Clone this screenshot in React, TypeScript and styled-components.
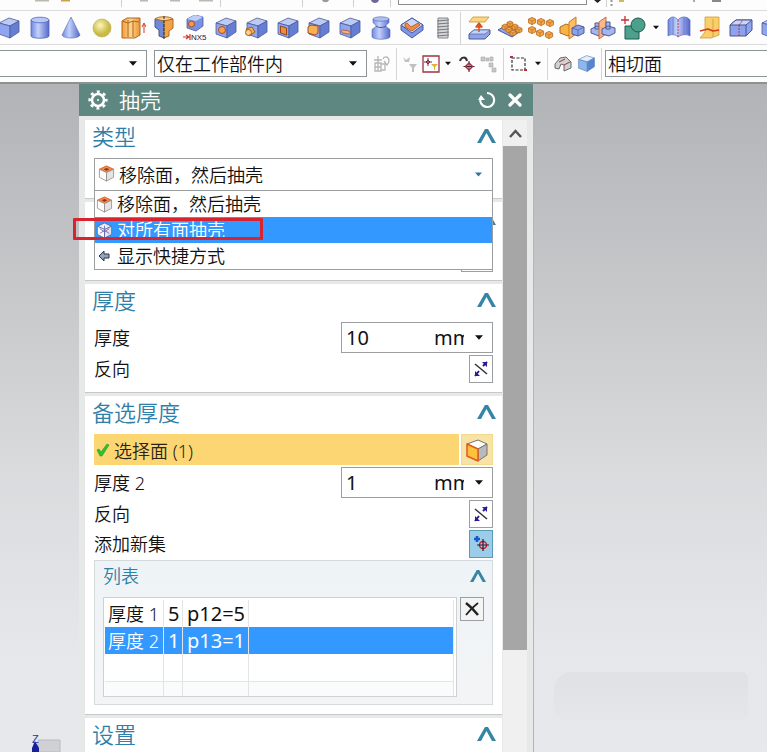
import React from 'react';
import styled, { createGlobalStyle, css } from 'styled-components';

const GlobalStyle = createGlobalStyle`
  * {
    box-sizing: border-box;
  }

  body {
    margin: 0;
    font-family: 'Noto Sans', 'Noto Sans CJK SC', sans-serif;
    font-size: 18px;
    font-weight: 350;
    color: #111;
  }

  button, input, select {
    font: inherit;
    color: inherit;
    margin: 0;
    padding: 0;
  }
`;

const Page = styled.div`
  display: flex;
  flex-direction: column;
  height: 100vh;
  overflow: hidden;
  background: #fdfdfd;
`;

/* ---------- toolbars ---------- */

const TopStrip = styled.div`
  display: flex;
  flex: none;
  height: 10px;
  overflow: hidden;

  svg {
    flex: none;
  }
`;

const SearchBox = styled.input`
  width: 189px;
  height: 5px;
  border: 1px solid #8c8c8c;
  border-top: 0;
  background: white;
`;

const IconBar = styled.div`
  display: flex;
  flex: none;
  align-items: center;
  height: 35px;
  margin-left: -7px;
  border-top: 1px solid #dcdcdc;
  border-bottom: 1px solid #dcdcdc;
  overflow: hidden;
`;

const ToolButton = styled.button<{ $width?: number }>`
  display: flex;
  flex: none;
  align-items: center;
  justify-content: center;
  width: ${({ $width }) => $width ?? 31}px;
  height: 26px;
  border: 0;
  background: none;
`;

const Divider = styled.span<{ $space?: number }>`
  flex: none;
  width: 1px;
  height: 32px;
  margin: 0 ${({ $space }) => $space ?? 2}px;
  background: #d4d4d4;
`;

const FilterBar = styled.div`
  display: flex;
  flex: none;
  align-items: center;
  height: 39px;
  border-bottom: 2px solid #8b9290;
  overflow: hidden;
`;

const Combo = styled.label<{ $width: number }>`
  position: relative;
  display: flex;
  flex: none;
  align-items: center;
  width: ${({ $width }) => $width}px;
  height: 27px;

  select {
    appearance: none;
    width: 100%;
    height: 100%;
    padding: 0 28px 0 2px;
    border: 1px solid #8f9496;
    border-radius: 0;
    background: white;
    line-height: 24px;
  }

  svg {
    position: absolute;
    right: 10px;
    pointer-events: none;
  }
`;

const LeftCombo = styled(Combo)`
  margin-left: -1px;
  margin-right: 7px;
`;

/* ---------- workspace ---------- */

const Workspace = styled.main`
  position: relative;
  display: flex;
  flex: 1;
  min-height: 0;
  padding-left: 79px;
  background: linear-gradient(#b2b3b6 0%, #c5c7c9 30%, #d9dbdd 58%, #e5e7ea 85%, #e6e8eb 100%);
`;

const Ghost = styled.div`
  position: absolute;
  right: 19px;
  bottom: 32px;
  width: 194px;
  height: 48px;
  border-radius: 18px 6px 6px 12px;
  background: linear-gradient(#e0e1e4, #e5e6e9);
`;

const Triad = styled.svg`
  position: absolute;
  left: 28px;
  bottom: 0;
`;

const Dialog = styled.section`
  display: flex;
  flex: none;
  flex-direction: column;
  width: 455px;
  border-right: 1px solid #b4b6b7;
  background: #e7e9e9;
`;

const TitleBar = styled.header`
  display: flex;
  flex: none;
  align-items: center;
  height: 32px;
  padding: 0 4px 0 9px;
  background: #5d8780;
  color: white;

  h1 {
    flex: 1;
    margin: 0 0 0 11px;
    font-size: 21px;
    font-weight: 350;
    line-height: 32px;
  }
`;

const DialogBody = styled.div`
  display: grid;
  flex: 1;
  grid-template-columns: 1fr 24px;
  column-gap: 1px;
  min-height: 0;
  padding: 4px 6px 0;
`;

const Sections = styled.div`
  display: flex;
  flex-direction: column;
  gap: 3px;
  min-width: 0;
`;

const Section = styled.section`
  flex: none;
  padding-bottom: 9px;
  background: white;
  box-shadow: 0 1px 0 #c6c8c9;
  margin-bottom: 1px;
`;

const SectionHeader = styled.div`
  display: flex;
  align-items: center;
  justify-content: space-between;
  height: 32px;
  margin-bottom: 6px;
  padding: 0 6px 0 7px;

  h2 {
    margin: 0;
    font-size: 22px;
    font-weight: 350;
    line-height: 32px;
    color: #2f7fa8;
  }
`;

const Fold = styled.button`
  display: flex;
  border: 0;
  background: none;
`;

const Rows = styled.div`
  display: flex;
  flex-direction: column;
  gap: 2px;
  padding: 0 9px;
`;

const Row = styled.div<{ $height?: number }>`
  display: flex;
  align-items: center;
  justify-content: space-between;
  height: ${({ $height }) => $height ?? 28}px;
  line-height: 26px;
`;

const TypeField = styled.div`
  position: relative;
  display: flex;
  align-items: flex-start;
  height: 31px;

  > svg {
    position: absolute;
    top: 7px;
    left: 4px;
    pointer-events: none;
  }

  > svg:last-of-type {
    top: 14px;
    left: auto;
    right: 11px;
  }

  select {
    appearance: none;
    flex: 1;
    height: 33px;
    padding: 0 28px 0 24px;
    border: 1px solid #9b9fa2;
    border-radius: 0;
    background: white;
  }
`;

const Menu = styled.ul`
  position: absolute;
  z-index: 2;
  top: 32px;
  left: 0;
  right: 0;
  margin: 0;
  padding: 0;
  border: 1px solid #9b9fa2;
  background: white;
  list-style: none;
`;

const MenuItem = styled.li<{ $active?: boolean }>`
  display: flex;
  align-items: center;
  gap: 4px;
  height: 26px;
  padding-left: 1px;
  line-height: 26px;
  ${({ $active }) =>
    $active &&
    css`
      background: #3398ff;
      color: white;
    `}
`;

const RedMark = styled.div`
  position: absolute;
  top: 27px;
  left: -22px;
  width: 190px;
  height: 22px;
  border: 3px solid #d9232f;
  border-radius: 1px;
  pointer-events: none;
`;

const Stub = styled.div`
  width: 32px;
  height: 32px;
  margin-left: auto;
  margin-bottom: -1px;
  border: 1px solid #9b9fa2;
`;

const ValueBox = styled.div`
  display: flex;
  align-items: center;
  width: 152px;
  height: 31px;
  border: 1px solid #9b9fa2;
  background: white;
  font-size: 20px;
  font-weight: 400;

  input {
    width: 92px;
    height: 27px;
    padding-left: 4px;
    border: 0;
    background: none;
    outline: 0;
  }

  select {
    appearance: none;
    width: 30px;
    height: 27px;
    border: 0;
    background: none;
  }

  svg {
    margin-left: 11px;
  }
`;

const SquareButton = styled.button<{ $tone?: 'blue' | 'gray' }>`
  display: flex;
  flex: none;
  align-items: center;
  justify-content: center;
  width: 24px;
  height: ${({ $tone }) => ($tone === 'gray' ? 24 : 28)}px;
  border: 1px solid ${({ $tone }) => ($tone === 'blue' ? '#5a9bb8' : '#9b9fa2')};
  background: ${({ $tone }) => ($tone === 'blue' ? '#9bcde8' : $tone === 'gray' ? '#f3f4f4' : 'white')};
`;

const PickRow = styled.div`
  display: flex;
  gap: 2px;
  height: 31px;

  span {
    display: flex;
    flex: 1;
    align-items: center;
    gap: 4px;
    padding-left: 2px;
    background: #fcd672;
    color: #2b2414;
  }

  button {
    display: flex;
    align-items: center;
    justify-content: center;
    width: 32px;
    border: 1px solid #f5d98d;
    background: #f8e3a6;
  }
`;

const ListPanel = styled.div`
  height: 145px;
  padding: 0 8px;
  border: 1px solid #d5dadc;
  background: linear-gradient(#eef3f7, #f3f5f5);
`;

const ListHeader = styled.div`
  display: flex;
  align-items: center;
  justify-content: space-between;
  height: 30px;
  margin-right: -2px;
  margin-bottom: 6px;

  h3 {
    margin: 0;
    font-size: 18px;
    font-weight: 350;
    line-height: 26px;
    color: #2f7fa8;
  }
`;

const ListBody = styled.div`
  display: flex;
  align-items: flex-start;
  gap: 3px;
`;

const TableFrame = styled.div`
  width: 354px;
  height: 100px;
  padding: 2px 2px 0 1px;
  border: 1px solid #cdd1d3;
  background: white;
`;

const SetTable = styled.table`
  width: 100%;
  table-layout: fixed;
  border-collapse: separate;
  border-spacing: 0;

  td {
    height: 27px;
    padding: 0 0 0 3px;
    border-right: 1px solid #e2e4e5;
    line-height: 26px;
    white-space: nowrap;
  }

  td + td {
    padding-left: 4px;
    font-size: 20px;
    font-weight: 400;
  }
`;

const SetRow = styled.tr<{ $state?: 'selected' | 'last' }>`
  ${({ $state }) =>
    $state === 'selected' &&
    css`
      background: #3398ff;
      color: white;
    `}

  && td {
    ${({ $state }) => $state === 'last' && 'height: 15px; border-top: 1px solid #e2e4e5; background: #fafbfb; line-height: 12px;'}
  }
`;

const ScrollBar = styled.div`
  display: flex;
  flex-direction: column;
  background: #f0f0f0;

  button {
    display: flex;
    align-items: center;
    justify-content: center;
    height: 26px;
    border: 0;
    background: #f0f0f0;
  }
`;

const Thumb = styled.div`
  flex: 0 0 504px;
  background: #a6a6a6;
`;

/* ---------- icons ---------- */

const Caret = ({ color = '#111', size = 8 }: { color?: string; size?: number }) => (
  <svg width={size} height="5" viewBox="0 0 9 5">
    <path d="M0 0h9L4.5 5z" fill={color} />
  </svg>
);

const FoldIcon = ({ small }: { small?: boolean }) => (
  <svg width={small ? 16 : 19} height={small ? 12 : 14} viewBox="0 0 19 14">
    <path d="M0 14L8 0h3l8 14h-4L9.5 4 4 14z" fill="#3784a4" />
  </svg>
);

interface CubeProps {
  size?: number;
  top?: string;
  left?: string;
  right?: string;
  line?: string;
  children?: React.ReactNode;
}

const Cube: React.FC<CubeProps> = ({
  size = 24,
  top = '#bccbf5',
  left = '#8fa5f0',
  right = '#667dd4',
  line = '#4d5a96',
  children,
}) => (
  <svg width={size} height={size} viewBox="0 0 24 24" strokeLinejoin="round">
    <path d="M2 7l10-5 10 3-9 5z" fill={top} stroke={line} strokeWidth=".8" />
    <path d="M2 7l11 3v12L2 18z" fill={left} stroke={line} strokeWidth=".8" />
    <path d="M22 5l-9 5v12l9-6z" fill={right} stroke={line} strokeWidth=".8" />
    {children}
  </svg>
);

const ShellCube = ({ open, size = 17 }: { open?: boolean; size?: number }) => (
  <svg width={size} height={size} viewBox="0 0 18 18" strokeLinejoin="round">
    <path d="M1.5 4.5L9 1l7.5 3.5L9 8z" fill={open ? '#f58a4b' : '#e9edf8'} stroke={open ? '#d4602a' : '#5f6aa0'} />
    <path d="M1.5 4.5L9 8v9l-7.5-4z" fill="#fdfdfd" stroke={open ? '#8b8580' : '#5f6aa0'} strokeWidth=".8" />
    <path d="M16.5 4.5L9 8v9l7.5-4z" fill="#e4e4e6" stroke={open ? '#8b8580' : '#5f6aa0'} strokeWidth=".8" />
    {open ? (
      <path d="M6 4.5l3-1.4 3 1.4L9 6z" fill="#8e3414" />
    ) : (
      <path d="M4 7l5 3.5L14 7M9 4v12M4 12l5-3 5 3" fill="none" stroke="#6d63b5" strokeWidth=".9" />
    )}
  </svg>
);

const FaceCube = () => (
  <svg width="24" height="24" viewBox="0 0 24 24" strokeLinejoin="round">
    <path d="M2 6l11-4 9 4-9 5z" fill="#fff" stroke="#77736c" />
    <path d="M22 6v11l-9 6V11z" fill="#b9babd" stroke="#77736c" />
    <path d="M2 6l11 5v12L2 18z" fill="#ffc13b" stroke="#e05a1c" strokeWidth="1.5" />
  </svg>
);

const Svg = ({ children, w = 26 }: { children: React.ReactNode; w?: number }) => (
  <svg width={w} height="24" viewBox={`0 0 ${w} 24`} fill="none" strokeLinejoin="round">
    {children}
  </svg>
);

const GradientDefs = styled.svg`
  position: absolute;
`;

const Gradients = () => (
  <GradientDefs width="0" height="0" aria-hidden>
    <defs>
      <linearGradient id="blue">
        <stop offset="0" stopColor="#6f88e0" />
        <stop offset=".4" stopColor="#c3d1fa" />
        <stop offset="1" stopColor="#5568cb" />
      </linearGradient>
      <linearGradient id="gold">
        <stop offset="0" stopColor="#f39a3d" />
        <stop offset=".5" stopColor="#ffd58f" />
        <stop offset="1" stopColor="#ee9132" />
      </linearGradient>
      <radialGradient id="ball" cx=".4" cy=".35">
        <stop offset="0" stopColor="#fbf6b8" />
        <stop offset="1" stopColor="#c9b944" />
      </radialGradient>
    </defs>
  </GradientDefs>
);

// small orange block used by the pattern tools
const nugget = (x: number, y: number, r = 3) => (
  <g key={`${x}-${y}`}>
    <path
      d={`M${x - r} ${y - r / 2}L${x} ${y - r}L${x + r} ${y - r / 2}V${y + r / 2}L${x} ${y + r}L${x - r} ${y + r / 2}z`}
      fill="#f6a745"
      stroke="#b5651b"
      strokeWidth=".8"
    />
    <path d={`M${x - r} ${y - r / 2}L${x} ${y}L${x + r} ${y - r / 2}M${x} ${y}V${y + r}`} stroke="#b5651b" strokeWidth=".6" />
  </g>
);

const featureTools: [string, React.ReactNode][] = [
  ['Block', <Cube />],
  [
    'Cylinder',
    <Svg>
      <path d="M4 4v16c0 3 18 3 18 0V4" fill="url(#blue)" stroke="#5365b5" strokeWidth=".8" />
      <ellipse cx="13" cy="4" rx="9" ry="2.8" fill="#b9c8f6" stroke="#5365b5" strokeWidth=".8" />
    </Svg>,
  ],
  [
    'Cone',
    <Svg>
      <path d="M13 1l9 18c-1 4-17 4-18 0z" fill="url(#blue)" stroke="#5365b5" strokeWidth=".6" />
    </Svg>,
  ],
  [
    'Sphere',
    <Svg>
      <circle cx="13" cy="12" r="9" fill="url(#ball)" stroke="#b3a748" strokeWidth=".6" />
    </Svg>,
  ],
  [
    'Extrude',
    <Svg>
      <path d="M2 5l5-3h13v17l-5 3H2z" fill="url(#gold)" stroke="#a96a25" />
      <path d="M8 4v17M13 5v16M2 5l6 2 5-2 6 1" stroke="#a96a25" />
      <path d="M24 17V8m-2 3l2-4 2 4" stroke="#d33b2c" />
    </Svg>,
  ],
  [
    'Revolve',
    <Svg>
      <path d="M13 4L4 3v8l4 3v6l5 2z" fill="#6f88d8" stroke="#48588f" />
      <path d="M13 4l9-1v9l-4 3v5l-5 2z" fill="#f3a24a" stroke="#a96a25" />
      <path d="M4 3c3-3 15-3 18 0l-9 2z" fill="#ffd08a" stroke="#a96a25" />
      <path d="M13 0v24" stroke="#333" strokeDasharray="3 1" />
    </Svg>,
  ],
  [
    'NX5',
    <svg width="26" height="26" viewBox="0 0 26 26">
      <path d="M5 4l8-4 8 2v9l-7 5-9-3z" fill="#7890e5" stroke="#4d5a96" strokeWidth=".8" />
      <path d="M5 4l9 2 7-4-8-2z" fill="#c0cdf6" />
      <circle cx="9.5" cy="9" r="3" fill="#f39a4a" stroke="#b24a20" />
      <path d="M1 22h6M4 20l3 2-3 2M8 19v6" stroke="#d33b2c" fill="none" strokeWidth="1.2" />
      <text x="9" y="25" fontSize="8" fontFamily="Liberation Sans" fill="#222">NX5</text>
    </svg>,
  ],
  ['Hole', <Cube><circle cx="8" cy="14" r="3.5" fill="#f6a050" stroke="#b24a20" /></Cube>],
  [
    'Boss',
    <Cube>
      <path d="M1 13l6-2 3 5-6 4z" fill="#f7b052" stroke="#a05c1c" />
      <circle cx="3.5" cy="16.5" r="3" fill="#ffd089" stroke="#a05c1c" />
    </Cube>,
  ],
  ['Pocket', <Cube><path d="M4.5 10l6 2v7l-6-2z" fill="#ef8b45" stroke="#96451a" /></Cube>],
  ['Pad', <Cube><path d="M1 11l3-2 7 1v7l-3 2-7-2z" fill="#f7b052" stroke="#b2481c" /></Cube>],
  ['Slot', <Cube><path d="M5 14l6 1c2 2 1 3-1 3l-5-1c-2-1-2-3 0-3z" fill="#f3b27c" stroke="#b0562a" strokeWidth=".8" /></Cube>],
  [
    'Groove',
    <Svg>
      <path d="M5 3v3c0 2 3 2 3 4s-4 2-4 4v7c2 3 16 3 18 0v-7c0-2-4-2-4-4s3-2 3-4V3z" fill="url(#blue)" stroke="#5365b5" strokeWidth=".6" />
      <path d="M8 10c2 2 8 2 10 0" stroke="#43529c" />
      <ellipse cx="13" cy="3" rx="8" ry="2.2" fill="#aebff2" stroke="#5365b5" strokeWidth=".6" />
    </Svg>,
  ],
  [
    'Emboss',
    <Svg>
      <path d="M2 9l11-7 11 7v5l-11 8L2 14z" fill="#7f97ea" stroke="#4d5a96" />
      <path d="M2 9l11-7 11 7-11 8z" fill="#cbd7fa" stroke="#4d5a96" />
      <path d="M6 8l2-1 4 4 7-4 2 2-8 6-7-4z" fill="#f28c3a" stroke="#b0531a" strokeWidth=".8" />
    </Svg>,
  ],
  [
    'Thread',
    <Svg>
      <path d="M8 2h10v20H8z" fill="#d3d5d7" stroke="#888" />
      <path d="M7 5l12-1M7 8l12-1M7 11l12-1M7 14l12-1M7 17l12-1M7 20l12-1" stroke="#75787c" />
    </Svg>,
  ],
];

const operationTools: [string, React.ReactNode][] = [
  [
    'Datum',
    <Svg>
      <path d="M7 1h16l-4 5H3z" fill="#ffd67a" stroke="#c49238" strokeWidth=".8" />
      <path d="M3 18l5-4h16v4l-5 5H3z" fill="#8da3ec" stroke="#4d5a96" />
      <path d="M3 18l5-4h16l-5 4z" fill="#c5d1f7" stroke="#4d5a96" strokeWidth=".6" />
      <path d="M13 16V9m-3 2l3-4 3 4z" stroke="#d8521e" strokeWidth="1.5" fill="#f28c3a" />
    </Svg>,
  ],
  [
    'Pattern feature',
    <Svg>
      <path d="M1 14l10-6 14 6-10 7z" fill="#8da3ec" stroke="#4d5a96" />
      {[[13, 8], [8, 11], [18, 11], [12, 14], [22, 14], [16, 17]].map(([x, y]) => nugget(x, y, 3))}
    </Svg>,
  ],
  [
    'Pattern geometry',
    <Svg>{[[4, 5], [13, 6], [22, 7], [4, 14], [12, 17], [21, 19]].map(([x, y]) => nugget(x, y, 3.6))}</Svg>,
  ],
  [
    'Mirror feature',
    <Svg>
      <path d="M1 11l6-3 8 3v6l-6 3-8-3z" fill="#f7b445" stroke="#a96a25" />
      <path d="M10 6l7-5v17l-7 5z" fill="#ffbf60" stroke="#c87a25" />
      <path d="M13 12l6-3 6 2v6l-6 3-6-2z" fill="#8da3ec" stroke="#4d5a96" />
      <path d="M13 12l6 2 6-3M19 14v6" stroke="#4d5a96" strokeWidth=".7" />
    </Svg>,
  ],
  [
    'Mirror geometry',
    <Svg>
      <path d="M1 13l6-3 8 3v4l-6 3-8-3zM5 7h4v6H5z" fill="#a5b6ef" stroke="#4d5a96" />
      <path d="M9 6l7-5v17l-7 5z" fill="#ffb07a" stroke="#cf6a35" fillOpacity=".9" />
      <path d="M12 13l6-3 7 2v5l-6 3-7-2zM16 6h4v7h-4z" fill="#a5b6ef" stroke="#4d5a96" />
    </Svg>,
  ],
];

const edgeTools: [string, React.ReactNode][] = [
  [
    'Sew',
    <Svg>
      <path d="M2 4c3-4 7-4 10 0 3-4 9-4 12 0v16c-3-2-8-2-12 1-3-3-7-3-10-1z" fill="url(#blue)" stroke="#5365b5" strokeWidth=".7" />
      <path d="M7 2v16M18 2v16" stroke="#6e83d6" />
      <path d="M12 4v17" stroke="#c43d4d" strokeDasharray="2 1" />
    </Svg>,
  ],
  [
    'Draft',
    <Svg>
      <path d="M8 1h14v18l-8 3H3l5-6z" fill="#f8cf6a" stroke="#cf9a35" strokeWidth=".8" />
      <path d="M16 3v18" stroke="#d9a33d" />
      <path d="M3 15l8-2 5 2 6-1" stroke="#d8381e" strokeWidth="1.5" />
    </Svg>,
  ],
  [
    'Edge blend',
    <Svg>
      <path d="M2 9l6-5h16v10l-6 6H2z" fill="#8da3ec" stroke="#4a5594" />
      <path d="M2 9l6-5h16l-6 5z" fill="#cad5f8" stroke="#4a5594" />
      <path d="M18 9v11" stroke="#4a5594" />
      <path d="M11 9v11M11 9l4-5" stroke="#b5324a" strokeDasharray="2 1" />
    </Svg>,
  ],
  ['Chamfer', <Cube />],
];

const SwapIcon = () => (
  <svg width="16" height="18" viewBox="0 0 16 18" fill="none">
    <path d="M2 4l12 10" stroke="#333" strokeWidth="1.5" />
    <path d="M14 2l-4 4M6 11l-4 5" stroke="#2a1a96" strokeWidth="2" />
    <path d="M9 2h5v5zM2 11v5h5z" fill="#2a1a96" />
  </svg>
);

const AddSetIcon = () => (
  <svg width="18" height="18" viewBox="0 0 18 18" fill="none">
    <path d="M5 1v6M2 4h6" stroke="#1558cf" strokeWidth="2.5" />
    <circle cx="11" cy="10" r="3.5" stroke="#c82032" strokeWidth="1.5" />
    <path d="M11 4v12M5 10h12" stroke="#3c1424" strokeWidth="1.2" />
  </svg>
);

const SelectionIcons = {
  assembly: (
    <svg width="18" height="18" viewBox="0 0 18 18" fill="none" stroke="#b4b6b8" strokeWidth="1.3">
      <path d="M6 1v8M2 5h8M3 8v8h6V8zM6 8v8M3 12h6M9 9h4v6H9M11 4c1-3 5-3 6 1 0 3-1 4-2 5l-3-4" />
    </svg>
  ),
  funnel: (
    <svg width="16" height="18" viewBox="0 0 16 18" fill="#bfc0c2">
      <path d="M1 2l3 3 4-3-1 5H3zM7 9h8l-3 4v4h-2v-4z" />
    </svg>
  ),
  snap: (
    <svg width="18" height="18" viewBox="0 0 18 18" fill="none">
      <path d="M1 1h16v16H1z" stroke="#9c3440" strokeWidth="1.3" />
      <path d="M6 3v8M2 7h8M6 5l2 2-2 2-2-2z" stroke="#7c2a42" />
      <path d="M9 9h7l-3 3v3h-1v-3z" fill="#e0b23c" />
    </svg>
  ),
  rotate: (
    <svg width="17" height="18" viewBox="0 0 17 18" fill="none">
      <path d="M2 6c1-4 6-5 7 0" stroke="#333" strokeWidth="2" />
      <path d="M11 6v11M5.5 11.5h11" stroke="#3c2330" />
      <path d="M11 8l3.5 3.5L11 15l-3.5-3.5z" stroke="#a32c40" strokeWidth="1.5" />
    </svg>
  ),
  tree: (
    <svg width="18" height="18" viewBox="0 0 18 18" fill="#c6c7c9" stroke="#aaa" strokeWidth=".6">
      <path d="M1 2h4v4H1zM6 3h3v3H6zM10 2h3v4h-3zM9 8h4v4H9zM12 13h4v4h-4z" />
    </svg>
  ),
  marquee: (
    <svg width="18" height="16" viewBox="0 0 18 16" fill="none">
      <path d="M2 2h13v12H2z" stroke="#333" strokeWidth="1.2" strokeDasharray="3 1.5" />
      <path d="M0 1h3M14 14h3" stroke="#c22b3a" strokeWidth="2" />
    </svg>
  ),
  shaded: (
    <svg width="18" height="16" viewBox="0 0 18 16" fill="#d0d1d3" stroke="#66696c">
      <path d="M1 8l5-6 6-1 5 5v6l-7 3V9L7 8 5 13l-4-1z" />
      <path d="M5 6l6-3M10 9l6-3" stroke="#a33" />
    </svg>
  ),
};

const GearIcon = () => (
  <svg width="20" height="20" viewBox="0 0 20 20" fill="none" stroke="white">
    <circle cx="10" cy="10" r="6" strokeWidth="2.5" />
    <circle cx="10" cy="10" r="8.3" strokeWidth="2.6" strokeDasharray="3 3.52" strokeDashoffset="1.5" />
    <circle cx="10" cy="10" r="1" fill="white" stroke="none" />
  </svg>
);

/* ---------- parts ---------- */

const SectionTitle = ({ title }: { title: string }) => (
  <SectionHeader>
    <h2>{title}</h2>
    <Fold aria-label={`${title} fold`}>
      <FoldIcon />
    </Fold>
  </SectionHeader>
);

const Thickness = ({ id, label, value }: { id: string; label: string; value: string }) => (
  <Row $height={31}>
    <label htmlFor={id}>{label}</label>
    <ValueBox>
      <input id={id} defaultValue={value} />
      <select aria-label="unit">
        <option>mm</option>
      </select>
      <Caret />
    </ValueBox>
  </Row>
);

const Reverse = () => (
  <Row>
    <span>反向</span>
    <SquareButton aria-label="反向">
      <SwapIcon />
    </SquareButton>
  </Row>
);

const tools = (items: [string, React.ReactNode][]) =>
  items.map(([name, icon]) => (
    <ToolButton key={name} aria-label={name}>
      {icon}
    </ToolButton>
  ));

const App: React.FC = () => {
  return (
    <Page>
      <GlobalStyle />
      <Gradients />
      <TopStrip>
        <svg width="398" height="10" viewBox="0 0 398 10">
          <path d="M35 0h14M140 0h8M170 0h10M199 0h14" stroke="#bdb8b0" strokeWidth="3" />
          <path d="M61 0h9" stroke="#c9a54a" strokeWidth="3" />
          <path d="M121.5 0v7M220.5 0v7M302.5 0v7M353.5 0v7M390.5 0v7" stroke="#d0d0d0" />
          <path d="M322 0c1 3 6 3 7 0" fill="#999" />
          <path d="M371 0c1 4 7 4 8 0" fill="#6d669d" />
        </svg>
        <SearchBox aria-label="search" />
        <svg width="180" height="10" viewBox="587 0 180 10">
          <path d="M594 0h7l-3.5 3z" fill="#222" />
          <path d="M606.5 0v7" stroke="#d0d0d0" />
          <path d="M611.5 0v7" stroke="#999" strokeDasharray="2 2" strokeWidth="2" />
          <path d="M619 0h5v2h-5z" fill="#cbbd55" />
          <path d="M694 0v2" stroke="#555" />
          <path d="M712 0h9v2h-9z" fill="#888" />
        </svg>
      </TopStrip>

      <IconBar>
        {tools(featureTools)}
        <Divider />
        {tools(operationTools)}
        <ToolButton aria-label="Unite">
          <Svg>
            <path d="M4 10h14v13H4z" fill="#4da08c" stroke="#1e5a4e" />
            <circle cx="17" cy="9" r="7" fill="#4da08c" stroke="#1e5a4e" />
            <path d="M4 0v8M0 4h8" stroke="#cb2a3c" strokeWidth="1.3" />
          </Svg>
        </ToolButton>
        <ToolButton $width={14} aria-label="More">
          <Caret size={6} />
        </ToolButton>
        {tools(edgeTools)}
      </IconBar>

      <FilterBar>
        <LeftCombo $width={148}>
          <select aria-label="filter" />
          <Caret />
        </LeftCombo>
        <Combo $width={213}>
          <select aria-label="scope">
            <option>仅在工作部件内</option>
          </select>
          <Caret />
        </Combo>
        <ToolButton $width={27} aria-label="Assembly">{SelectionIcons.assembly}</ToolButton>
        <Divider />
        <ToolButton $width={22} aria-label="Reset filter">{SelectionIcons.funnel}</ToolButton>
        <ToolButton $width={20} aria-label="Snap">{SelectionIcons.snap}</ToolButton>
        <ToolButton $width={14} aria-label="Snap options">
          <Caret size={6} />
        </ToolButton>
        <ToolButton $width={22} aria-label="Orient">{SelectionIcons.rotate}</ToolButton>
        <ToolButton $width={24} aria-label="Structure">{SelectionIcons.tree}</ToolButton>
        <Divider />
        <ToolButton $width={26} aria-label="Marquee">{SelectionIcons.marquee}</ToolButton>
        <ToolButton $width={11} aria-label="Marquee options">
          <Caret size={6} />
        </ToolButton>
        <Divider $space={4} />
        <ToolButton $width={22} aria-label="Shaded">{SelectionIcons.shaded}</ToolButton>
        <ToolButton $width={24} aria-label="Solid">
          <Cube size={19} top="#e3eefb" left="#8db8ee" right="#5685cf" line="#5a7fb8" />
        </ToolButton>
        <Divider $space={3} />
        <Combo $width={213}>
          <select aria-label="face rule">
            <option>相切面</option>
          </select>
        </Combo>
      </FilterBar>

      <Workspace>
        <Ghost />
        <Triad width="34" height="18" viewBox="0 0 34 18">
          <path d="M10 6h22v12H10z" fill="#d0d1d5" stroke="#b9babd" />
          <path d="M7 7l4 7v4H4v-4z" fill="#15209a" />
          <text x="4" y="9" fontSize="11" fontFamily="Liberation Sans" fill="#2433b5">Z</text>
        </Triad>

        <Dialog>
          <TitleBar>
            <GearIcon />
            <h1>抽壳</h1>
            <ToolButton $width={28} aria-label="Reset">
              <svg width="18" height="18" viewBox="0 0 18 18" fill="none">
                <path d="M9 2a7 7 0 1 1-6.5 5" stroke="white" strokeWidth="2.2" />
                <path d="M0 9l3-5 4 5z" fill="white" />
              </svg>
            </ToolButton>
            <ToolButton $width={28} aria-label="Close">
              <svg width="14" height="14" viewBox="0 0 14 14">
                <path d="M2 2l10 10M12 2L2 12" stroke="white" strokeWidth="3.2" strokeLinecap="round" />
              </svg>
            </ToolButton>
          </TitleBar>

          <DialogBody>
            <Sections>
              <Section>
                <SectionTitle title="类型" />
                <Rows>
                  <TypeField>
                    <select aria-label="类型">
                      <option>移除面，然后抽壳</option>
                    </select>
                    <ShellCube open />
                    <Caret color="#2f78a0" size={7} />
                    <Menu>
                      <MenuItem>
                        <ShellCube open />
                        移除面，然后抽壳
                      </MenuItem>
                      <MenuItem $active>
                        <ShellCube />
                        对所有面抽壳
                      </MenuItem>
                      <MenuItem>
                        <svg width="17" height="12" viewBox="0 0 17 12">
                          <path d="M3 6l5-5v3h5v4H8v3z" fill="#8fa3bd" stroke="#2c3444" />
                        </svg>
                        显示快捷方式
                      </MenuItem>
                      <RedMark />
                    </Menu>
                  </TypeField>
                </Rows>
              </Section>

              <Section>
                <SectionTitle title="" />
                <Rows>
                  <Stub />
                </Rows>
              </Section>

              <Section>
                <SectionTitle title="厚度" />
                <Rows>
                  <Thickness id="thickness" label="厚度" value="10" />
                  <Reverse />
                </Rows>
              </Section>

              <Section>
                <SectionTitle title="备选厚度" />
                <Rows>
                  <PickRow>
                    <span>
                      <svg width="14" height="14" viewBox="0 0 14 14">
                        <path d="M1 7l2-1 2 3 6-8 2 1-7 11H4z" fill="#2fc22f" stroke="#1f9a25" strokeWidth=".6" />
                      </svg>
                      选择面 (1)
                    </span>
                    <button aria-label="选择面">
                      <FaceCube />
                    </button>
                  </PickRow>
                  <Thickness id="thickness2" label="厚度 2" value="1" />
                  <Reverse />
                  <Row>
                    <span>添加新集</span>
                    <SquareButton $tone="blue" aria-label="添加新集">
                      <AddSetIcon />
                    </SquareButton>
                  </Row>
                  <ListPanel>
                    <ListHeader>
                      <h3>列表</h3>
                      <Fold aria-label="列表 fold">
                        <FoldIcon small />
                      </Fold>
                    </ListHeader>
                    <ListBody>
                      <TableFrame>
                        <SetTable>
                          <colgroup>
                            <col width="59" />
                            <col width="19" />
                            <col width="66" />
                            <col />
                          </colgroup>
                          <tbody>
                            <SetRow>
                              <td>厚度 1</td>
                              <td>5</td>
                              <td>p12=5</td>
                              <td />
                            </SetRow>
                            <SetRow $state="selected">
                              <td>厚度 2</td>
                              <td>1</td>
                              <td>p13=1</td>
                              <td />
                            </SetRow>
                            <SetRow>
                              <td />
                              <td />
                              <td />
                              <td />
                            </SetRow>
                            <SetRow $state="last">
                              <td />
                              <td />
                              <td />
                              <td />
                            </SetRow>
                          </tbody>
                        </SetTable>
                      </TableFrame>
                      <SquareButton $tone="gray" aria-label="Delete">
                        <svg width="16" height="16" viewBox="0 0 16 16" fill="none">
                          <path d="M2 2c4 3 8 7 12 12" stroke="#222" strokeWidth="2.5" />
                          <path d="M14 2C10 5 6 9 2 14" stroke="#222" strokeWidth="1.8" />
                        </svg>
                      </SquareButton>
                    </ListBody>
                  </ListPanel>
                </Rows>
              </Section>

              <Section>
                <SectionTitle title="设置" />
              </Section>
            </Sections>

            <ScrollBar>
              <button aria-label="Scroll up">
                <svg width="13" height="9" viewBox="0 0 13 9" fill="none">
                  <path d="M1 8l5.5-6L12 8" stroke="#555" strokeWidth="2.5" />
                </svg>
              </button>
              <Thumb />
            </ScrollBar>
          </DialogBody>
        </Dialog>
      </Workspace>
    </Page>
  );
};

export default App;
